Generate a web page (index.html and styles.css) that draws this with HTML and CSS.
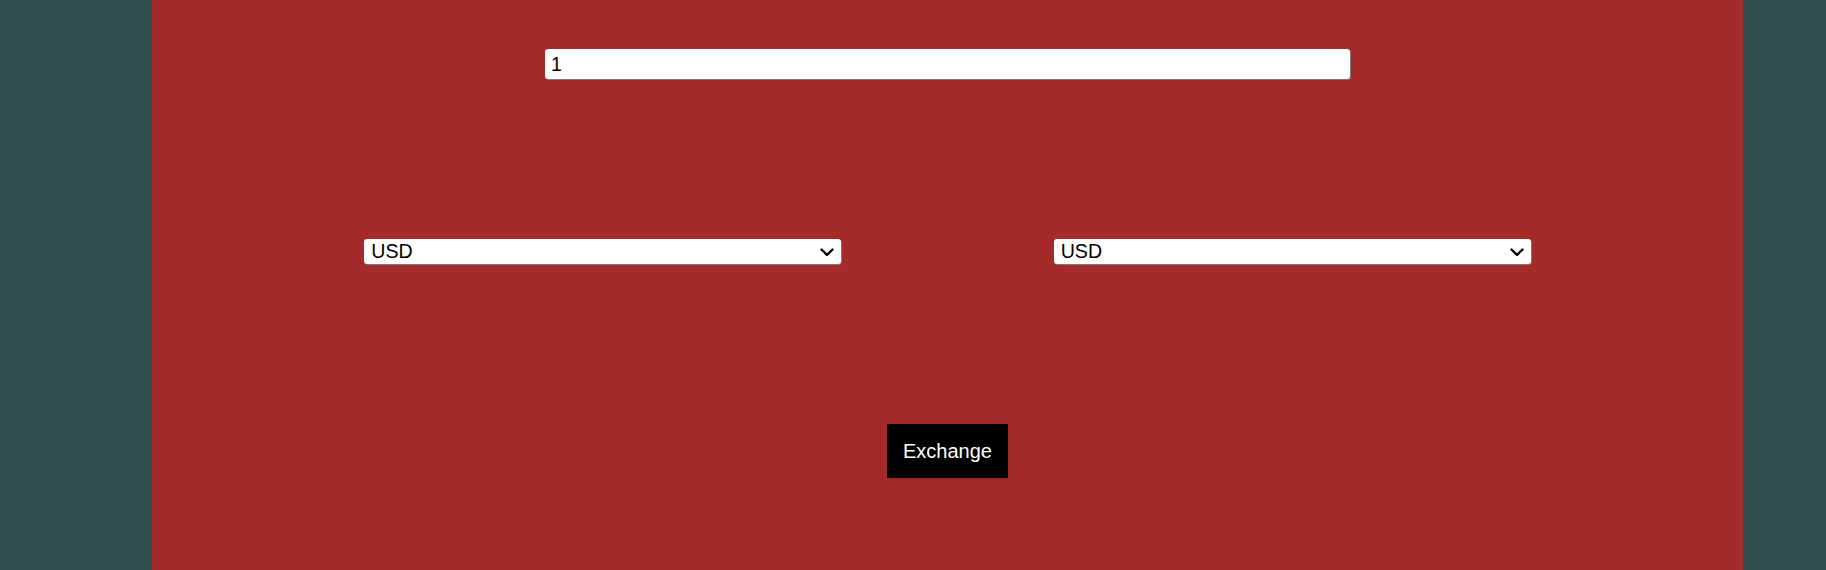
FILE: index.html
```html
<!DOCTYPE html>
<html>
<head>
<meta charset="utf-8">
<link rel="stylesheet" href="styles.css">
</head>
<body>
<div class="app">
  <input class="amount" type="text" value="1">
  <div class="selects">
    <span class="select-wrap">
      <select class="currency"><option>USD</option><option>EUR</option></select>
      <svg class="chevron" width="14" height="9" viewBox="0 0 14 9"><path d="M1.5 1.5 L7 7 L12.5 1.5" fill="none" stroke="#000" stroke-width="2.4" stroke-linecap="round" stroke-linejoin="round"/></svg>
    </span>
    <span class="select-wrap">
      <select class="currency"><option>USD</option><option>EUR</option></select>
      <svg class="chevron" width="14" height="9" viewBox="0 0 14 9"><path d="M1.5 1.5 L7 7 L12.5 1.5" fill="none" stroke="#000" stroke-width="2.4" stroke-linecap="round" stroke-linejoin="round"/></svg>
    </span>
  </div>
  <button class="exchange">Exchange</button>
</div>
</body>
</html>
```
FILE: styles.css
```css
html, body {
  margin: 0;
  padding: 0;
  background: #2f4f4f;
  font-family: "Liberation Sans", Arial, sans-serif;
}
.app {
  margin-left: 152px;
  width: 1591px;
  min-height: 570px;
  background: #a52a2a;
  display: flex;
  flex-direction: column;
  align-items: center;
  padding-top: 49px;
  box-sizing: border-box;
}
.amount {
  box-sizing: border-box;
  width: 805px;
  height: 30px;
  border: none;
  border-radius: 3px;
  box-shadow: 1px 1px 0 #7a7a7a;
  padding: 4px 6px;
  font-family: "Liberation Sans", Arial, sans-serif;
  font-size: 19.6px;
  color: #000;
  background: #fff;
  outline: none;
}
.selects {
  margin-top: 160px;
  width: 100%;
  display: flex;
  justify-content: space-evenly;
}
.select-wrap {
  position: relative;
  display: block;
  width: 477px;
  height: 25px;
}
.currency {
  box-sizing: border-box;
  appearance: none;
  -webkit-appearance: none;
  display: block;
  width: 477px;
  height: 25px;
  padding: 0 0 0 7px;
  font-family: "Liberation Sans", Arial, sans-serif;
  font-size: 19.6px;
  line-height: 23px;
  color: #000;
  background: #fff;
  border: none;
  border-radius: 3px;
  box-shadow: 1px 1px 0 #7a7a7a;
}
.chevron {
  position: absolute;
  right: 7px;
  top: 9px;
  pointer-events: none;
}
.exchange {
  margin-top: 160px;
  width: 121px;
  height: 54px;
  background: #000;
  color: #fff;
  border: none;
  padding: 0;
  font-family: "Liberation Sans", Arial, sans-serif;
  font-size: 20px;
}
```
